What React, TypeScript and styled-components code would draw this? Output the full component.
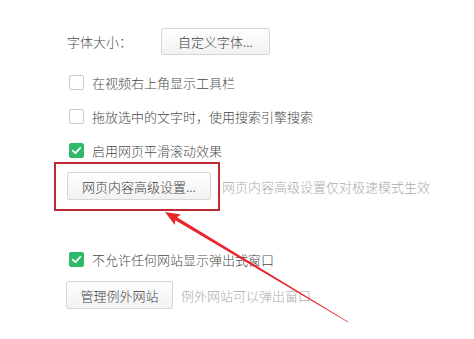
import React from "react";
import styled, { createGlobalStyle } from "styled-components";

const Global = createGlobalStyle`
  html, body { margin: 0; padding: 0; background: #ffffff; }
  body { font-family: "Noto Sans CJK SC", "Noto Sans", sans-serif; }
`;

const Page = styled.div`
  position: relative;
  width: 474px;
  height: 339px;
  overflow: hidden;
  box-sizing: border-box;
  padding: 28px 0 0 66px;
  font-size: 13px;
  font-weight: 300;
  color: #4a4a4a;
`;

const Row = styled.div<{ $top: number; $height?: number; $shift?: number }>`
  display: flex;
  align-items: center;
  margin-top: ${(p) => p.$top}px;
  height: ${(p) => p.$height ?? 20}px;
  margin-left: ${(p) => p.$shift ?? 0}px;
`;

const Label = styled.span`
  width: 94px;
  padding-left: 1px;
  white-space: nowrap;
`;

const Button = styled.button<{ $w: number }>`
  box-sizing: border-box;
  width: ${(p) => p.$w}px;
  height: 100%;
  padding: 0;
  border: 1px solid #d6d6d6;
  border-radius: 2px;
  background: linear-gradient(#fefefe, #f2f2f2);
  font-family: inherit;
  font-size: 13px;
  font-weight: 300;
  color: #3f3f3f;
  white-space: nowrap;
`;

const Box = styled.span<{ $checked?: boolean }>`
  box-sizing: border-box;
  width: 15px;
  height: 15px;
  margin-left: 3px;
  margin-right: 8px;
  border-radius: 2px;
  border: 1px solid ${(p) => (p.$checked ? "#2fb96b" : "#c9c9c9")};
  background: ${(p) => (p.$checked ? "#2fb96b" : "#ffffff")};
  display: flex;
  align-items: center;
  justify-content: center;
  flex: none;
`;

const Text = styled.span`
  white-space: nowrap;
`;

const Hint = styled.span<{ $gap: number }>`
  margin-left: ${(p) => p.$gap}px;
  color: #ababab;
  white-space: nowrap;
`;

const Highlight = styled.div`
  box-sizing: border-box;
  width: 166px;
  height: 49px;
  border: 2px solid #bb2a33;
  padding: 8px 7px 9px 11px;
  display: flex;
`;

const Arrow = styled.svg`
  position: absolute;
  left: 0;
  top: 0;
  pointer-events: none;
`;

function Check({ checked }: { checked?: boolean }) {
  return (
    <Box $checked={checked}>
      {checked && (
        <svg width="11" height="11" viewBox="0 0 11 11">
          <path d="M1.8 5.6 L4.4 8.1 L9.3 2.9" fill="none" stroke="#fff" strokeWidth="1.8" strokeLinecap="round" strokeLinejoin="round" />
        </svg>
      )}
    </Box>
  );
}

function arrowPoints() {
  const T = [165, 212];
  const E = [348, 322];
  const dx = E[0] - T[0];
  const dy = E[1] - T[1];
  const L = Math.hypot(dx, dy);
  const u = [dx / L, dy / L];
  const n = [-u[1], u[0]];
  const hl = 15;
  const hw = 6;
  const B = [T[0] + u[0] * hl, T[1] + u[1] * hl];
  const sw0 = 1.7;
  const sw1 = 0.4;
  const pts = [
    T,
    [B[0] + n[0] * hw, B[1] + n[1] * hw],
    [B[0] - u[0] * 2 + n[0] * sw0, B[1] - u[1] * 2 + n[1] * sw0],
    [E[0] + n[0] * sw1, E[1] + n[1] * sw1],
    [E[0] - n[0] * sw1, E[1] - n[1] * sw1],
    [B[0] - u[0] * 2 - n[0] * sw0, B[1] - u[1] * 2 - n[1] * sw0],
    [B[0] - n[0] * hw, B[1] - n[1] * hw],
  ];
  return pts.map((p) => p.map((v) => v.toFixed(1)).join(",")).join(" ");
}

export default function App() {
  return (
    <>
      <Global />
      <Page>
        <Row $top={0} $height={27}>
          <Label>字体大小：</Label>
          <Button $w={109}>自定义字体...</Button>
        </Row>
        <Row $top={17}>
          <Check />
          <Text>在视频右上角显示工具栏</Text>
        </Row>
        <Row $top={14}>
          <Check />
          <Text>拖放选中的文字时，使用搜索引擎搜索</Text>
        </Row>
        <Row $top={14}>
          <Check checked />
          <Text>启用网页平滑滚动效果</Text>
        </Row>
        <Row $top={2} $height={49} $shift={-12}>
          <Highlight>
            <Button $w={144}>网页内容高级设置...</Button>
          </Highlight>
          <Hint $gap={2}>网页内容高级设置仅对极速模式生效</Hint>
        </Row>
        <Row $top={38}>
          <Check checked />
          <Text>不允许任何网站显示弹出式窗口</Text>
        </Row>
        <Row $top={12} $height={28}>
          <Button $w={107}>管理例外网站</Button>
          <Hint $gap={8}>例外网站可以弹出窗口</Hint>
        </Row>
        <Arrow width="474" height="339" viewBox="0 0 474 339">
          <polygon points={arrowPoints()} fill="#e8262c" />
        </Arrow>
      </Page>
    </>
  );
}
